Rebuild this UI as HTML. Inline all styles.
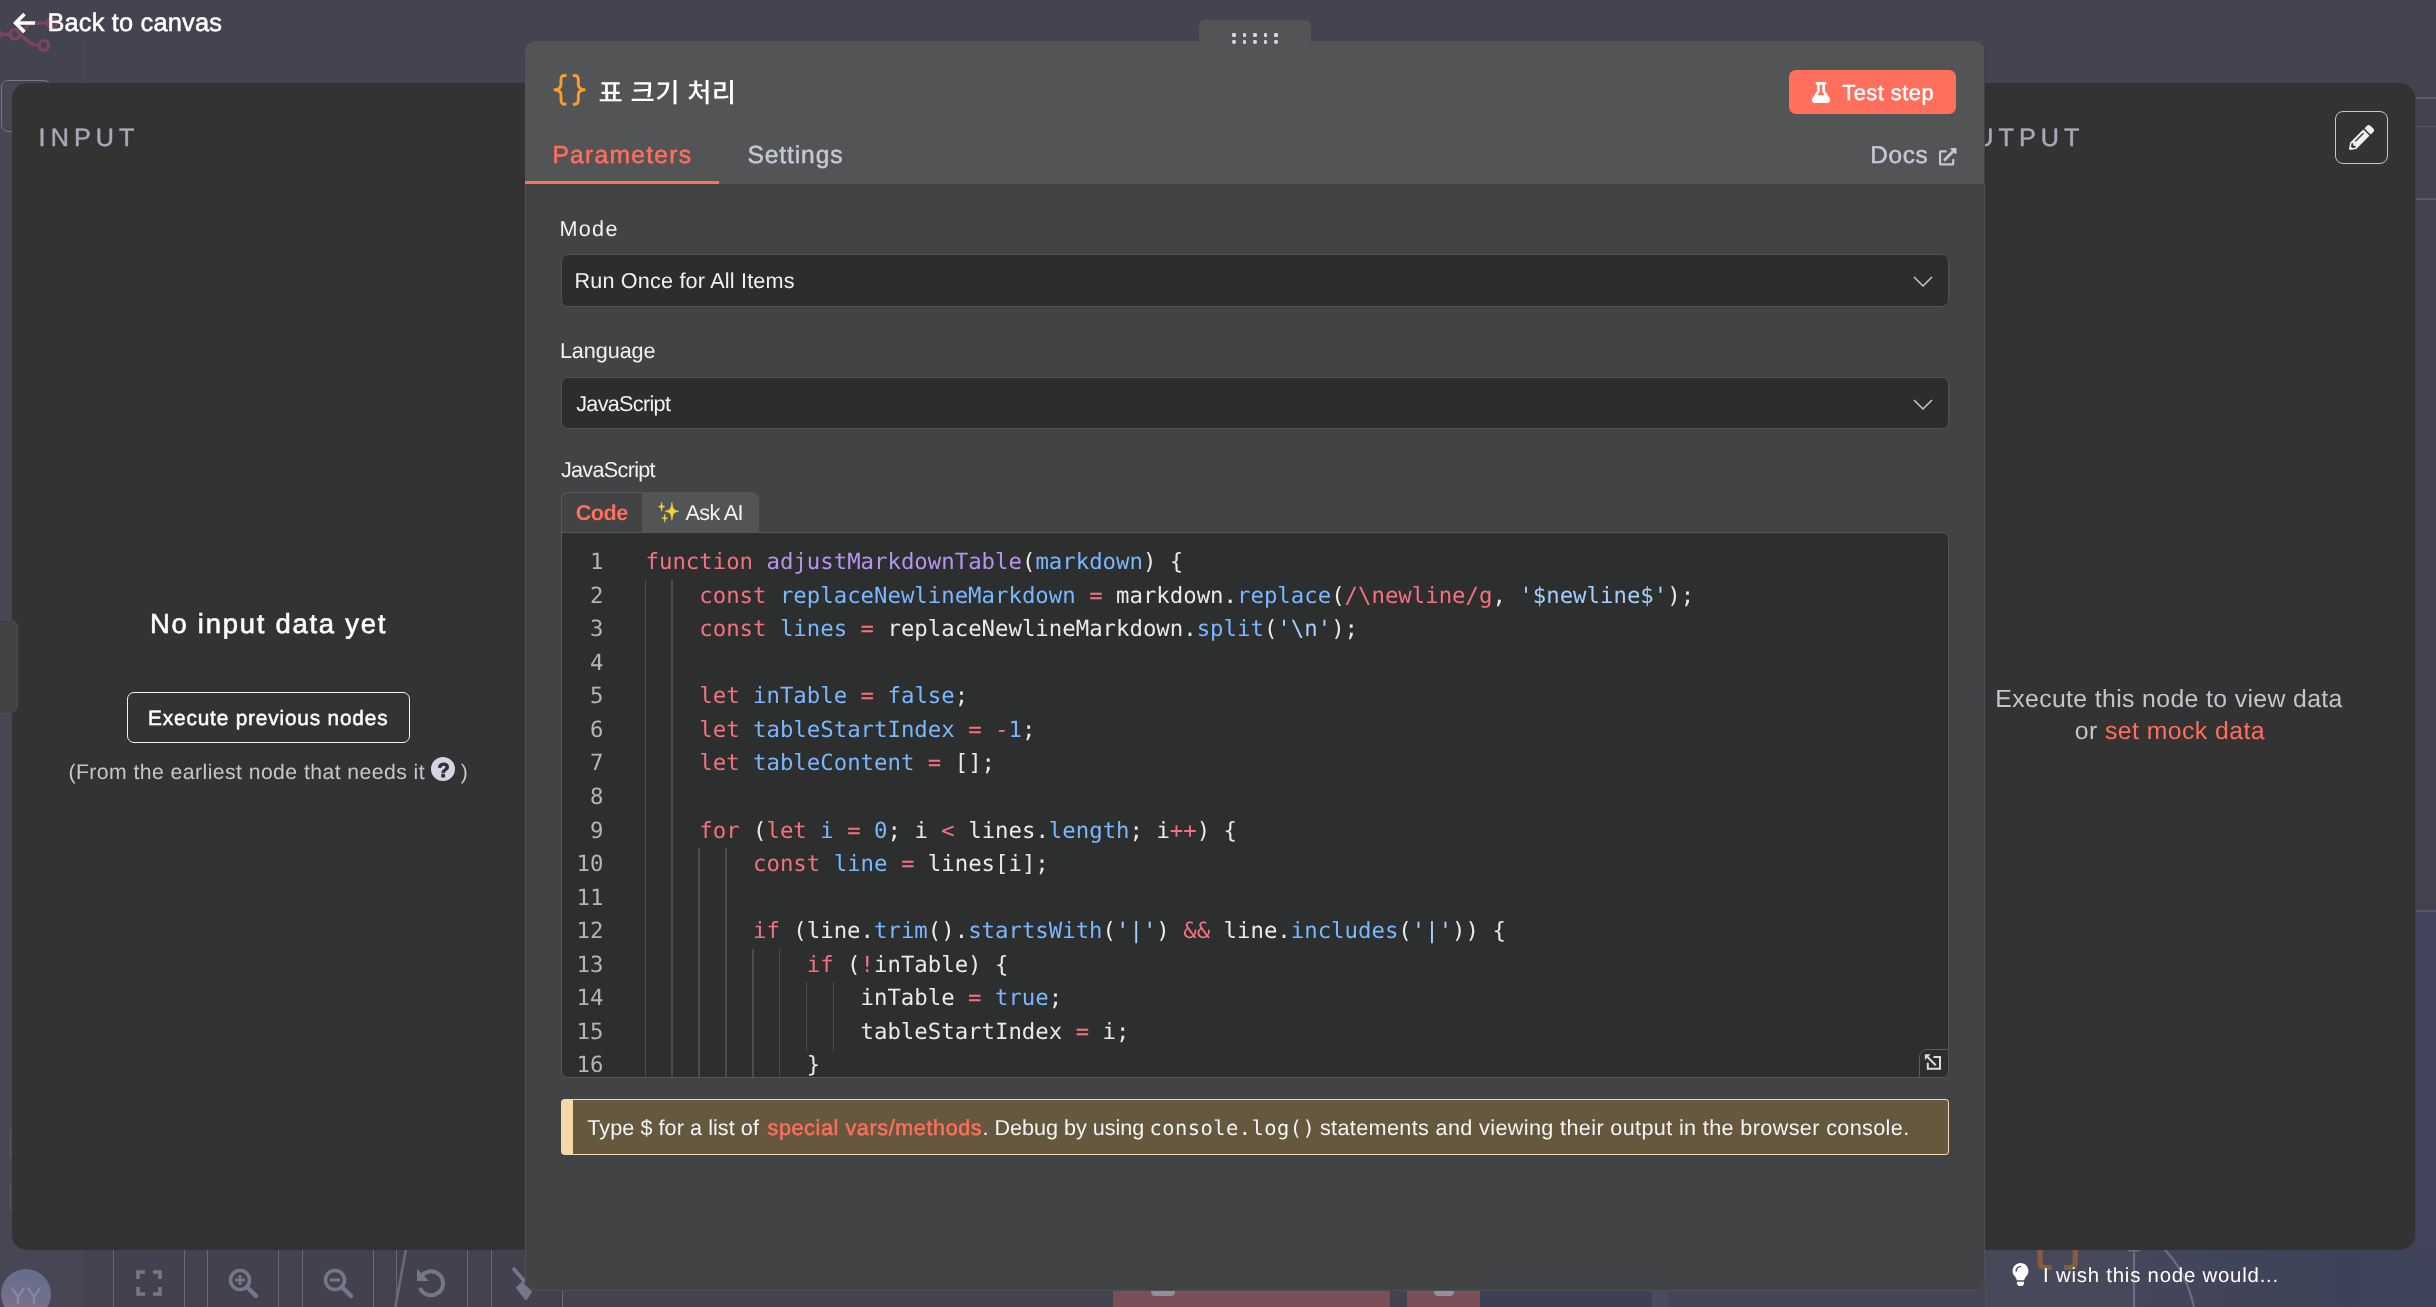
<!DOCTYPE html>
<html lang="en"><head><meta charset="utf-8"><title>n8n - Code node</title>
<style>
html,body{margin:0;padding:0;background:#444450;}
body{width:2436px;height:1307px;position:relative;overflow:hidden;text-rendering:geometricPrecision;font-family:"Liberation Sans","Noto Sans CJK KR",sans-serif;}
body div, body svg, body i{position:absolute;box-sizing:border-box;}
.t{white-space:nowrap;line-height:1;}
.t span{position:static;}
#ed .ln{left:0;width:41.5px;text-align:right;color:#b4b4b6;font:22.33px/33.5px "DejaVu Sans Mono","Liberation Mono",monospace;height:33.5px;}
#ed .cl{white-space:pre;color:#e9e9ea;font:22.33px/33.5px "DejaVu Sans Mono","Liberation Mono",monospace;height:33.5px;}
#ed b{font-weight:400;}
.k,.o{color:#f4727f;}
.f{color:#b794f0;}
.v{color:#79b8ff;}
.s{color:#a5cfff;}
.g{display:block;width:1.5px;height:34.6px;background:#4b4c4c;}
</style></head>
<body>
<div id="w" style="left:0;top:0;width:2436px;height:1307px;will-change:transform;">
<!-- canvas behind overlay -->
<div style="left:84px;top:84px;width:2352px;height:1223px;background:#42434f;"></div>
<div style="left:0px;top:84px;width:84px;height:1223px;background:#464654;"></div>
<div style="left:83px;top:40px;width:1px;height:43px;background:#4c4c5a;"></div>
<svg style="left:0;top:0" width="70" height="60" viewBox="0 0 70 60"><g fill="none" stroke="#7a4561" stroke-width="3.3"><path d="M-2 34.3H9.500"/><circle cx="-4" cy="34.3" r="4.600"/><circle cx="14.700" cy="34.300" r="4.700"/><path d="M19.300 33.200C26 33 25 23 32 23H47"/><circle cx="52" cy="23" r="4.700"/><path d="M19.300 35.500C27 36 27 45.500 39 45.500"/><circle cx="43.900" cy="45.500" r="4.800"/></g></svg>
<div style="left:1px;top:80px;width:50px;height:52px;border:1px solid #777887;border-radius:7px;"></div>
<div style="left:10px;top:1127px;width:30px;height:32px;border:1px solid #5a5b6a;border-radius:6px;"></div>
<div style="left:10px;top:1180px;width:30px;height:34px;border:1px solid #5a5b6a;border-radius:6px;"></div>
<div style="left:112.7px;top:1246px;width:72px;height:70px;background:#41424e;border:1px solid #676879;border-radius:4px;"></div>
<div style="left:206.9px;top:1246px;width:72px;height:70px;background:#41424e;border:1px solid #676879;border-radius:4px;"></div>
<div style="left:301.8px;top:1246px;width:72px;height:70px;background:#41424e;border:1px solid #676879;border-radius:4px;"></div>
<div style="left:395.7px;top:1246px;width:72px;height:70px;background:#41424e;border:1px solid #676879;border-radius:4px;"></div>
<div style="left:490.9px;top:1246px;width:72px;height:70px;background:#41424e;border:1px solid #676879;border-radius:4px;"></div>
<svg style="left:136px;top:1270px" width="26" height="26" viewBox="0 0 26 26"><g fill="none" stroke="#76768a" stroke-width="3.6"><path d="M2 9V2h7M17 2h7v7M24 17v7h-7M9 24H2v-7"/></g></svg>
<svg style="left:228px;top:1268px" width="32" height="32" viewBox="0 0 32 32"><g fill="none" stroke="#76768a" stroke-width="3.6"><circle cx="12" cy="12" r="9.5"/><path d="M19 19l9 9" stroke-linecap="round" stroke-width="4.5"/><path d="M7 12h10M12 7v10" stroke-width="3"/></g></svg>
<svg style="left:323px;top:1268px" width="32" height="32" viewBox="0 0 32 32"><g fill="none" stroke="#76768a" stroke-width="3.6"><circle cx="12" cy="12" r="9.5"/><path d="M19 19l9 9" stroke-linecap="round" stroke-width="4.5"/><path d="M7 12h10" stroke-width="3"/></g></svg>
<svg style="left:416px;top:1266px" width="32" height="34" viewBox="0 0 32 34"><g fill="none" stroke="#76768a" stroke-width="4"><path d="M4.5 11.5A12 12 0 1 1 4 22"/></g><path d="M1 3v12h12z" fill="#76768a"/></svg>
<svg style="left:392px;top:1249px" width="16" height="60" viewBox="0 0 16 60"><path d="M14 0L3 60" stroke="#6a6a7a" stroke-width="2.5" fill="none"/></svg>
<svg style="left:510px;top:1266px" width="30" height="34" viewBox="0 0 30 34"><path d="M3 2l12 14M12 18l8 8-4 6-8-10z" stroke="#76768a" stroke-width="3.5" fill="#76768a"/></svg>
<div style="left:1px;top:1269px;width:50px;height:50px;border-radius:50%;background:linear-gradient(190deg,#666d8d 15%,#746f8b 60%,#93717d 100%);"></div>
<div class="t" style="left:10.0px;top:1285px;font-size:24px;color:#8a8a9f;">YY</div>
<div style="left:1113px;top:1291px;width:276.5px;height:16px;background:#7a4f57;"></div>
<div style="left:1407px;top:1291px;width:73px;height:16px;background:#7a4f57;"></div>
<div style="left:1480px;top:1291px;width:172px;height:16px;background:#3d4054;"></div>
<div style="left:1652px;top:1291px;width:16px;height:16px;background:#494b5f;"></div>
<div style="left:1668px;top:1291px;width:317px;height:16px;background:#444658;"></div>
<div style="left:1151px;top:1291px;width:24px;height:5px;background:#8f8f9e;border-radius:0 0 4px 4px;"></div>
<div style="left:1434px;top:1291px;width:20px;height:5px;background:#8f8f9e;border-radius:0 0 4px 4px;"></div>
<div style="left:2416px;top:97px;width:20px;height:1.5px;background:#5a5a6c;"></div>
<div style="left:2416px;top:125.5px;width:20px;height:1.5px;background:#5a5a6c;"></div>
<div style="left:2416px;top:198px;width:20px;height:1.5px;background:#5a5a6c;"></div>
<div style="left:2416px;top:911px;width:20px;height:396px;background:#41445a;"></div>
<div style="left:2416px;top:910px;width:20px;height:1.5px;background:#55586c;"></div>
<div style="left:1985px;top:1250px;width:149px;height:57px;background:#47485a;"></div>
<div style="left:2134px;top:1250px;width:302px;height:57px;background:linear-gradient(90deg,#44475b,#3d4258 70%,#3f4359);"></div>
<svg style="left:2030px;top:1249px" width="220" height="58" viewBox="0 0 220 58"><g fill="none" stroke="#6a6c81" stroke-width="2.200"><path d="M104 0V58M98 1.500H110"/><path d="M134 0C152 18 160 40 164 58"/></g><path d="M10 0v13q0 5.500 5.500 5.500h6M45.300 0v13q0 5.500-5.500 5.500h-6" stroke="#875c3d" stroke-width="5.200" fill="none"/></svg>
<svg style="left:13px;top:12px" width="24" height="22" viewBox="0 0 24 22"><path d="M11.5 2L2.5 11l9 9M3 11h19" fill="none" stroke="#fff" stroke-width="3.6" stroke-linecap="butt" stroke-linejoin="miter"/></svg>
<div class="t" style="left:47.4px;top:11px;font-size:25.4px;color:#fff;letter-spacing:0.177px;-webkit-text-stroke:0.5px #fff;">Back to canvas</div>
<div style="left:12px;top:83px;width:560px;height:1167px;background:#333333;border-radius:15px 0 0 15px;"></div>
<div class="t" style="left:38.6px;top:126px;font-size:25.2px;color:#a8a9b7;letter-spacing:5.075px;-webkit-text-stroke:0.45px #a8a9b7;">INPUT</div>
<div class="t" style="left:149.9px;top:610px;font-size:27.4px;color:#fff;letter-spacing:1.769px;-webkit-text-stroke:0.6px #fff;">No input data yet</div>
<div style="left:127px;top:692px;width:283px;height:50.5px;border:1.8px solid #f2f2f2;border-radius:7px;"></div>
<div class="t" style="left:148.1px;top:709px;font-size:20.8px;color:#fff;letter-spacing:0.833px;-webkit-text-stroke:0.5px #fff;">Execute previous nodes</div>
<div class="t" style="left:68.5px;top:762px;font-size:21.2px;color:#c6c6cc;letter-spacing:0.436px;">(From the earliest node that needs it</div>
<svg style="left:431px;top:757px" width="24" height="24" viewBox="0 0 24 24"><circle cx="12" cy="12" r="12" fill="#d4d5e3"/></svg>
<div class="t" style="left:437.6px;top:761px;font-size:20px;color:#2f3036;font-weight:700;-webkit-text-stroke:0.9px #2f3036;">?</div>
<div class="t" style="left:460.7px;top:762px;font-size:21.2px;color:#c6c6cc;">)</div>
<div style="left:-10px;top:619px;width:28px;height:95px;background:#424345;border:1px solid #4c4d50;border-radius:9px;"></div>
<div style="left:1900px;top:83px;width:515px;height:1167px;background:#333333;border-radius:0 15px 15px 0;"></div>
<div class="t" style="left:1950.6px;top:126px;font-size:25.2px;color:#a8a9b7;letter-spacing:5.075px;-webkit-text-stroke:0.45px #a8a9b7;">OUTPUT</div>
<div style="left:2335px;top:111px;width:53px;height:53px;border:1.8px solid #c6c6ca;border-radius:8px;"></div>
<svg style="left:2349px;top:125px" width="25" height="25" viewBox="0 0 512 512"><path fill="#f0f0f4" d="M497.9 142.1l-46.1 46.1c-4.7 4.7-12.3 4.7-17 0l-111-111c-4.7-4.7-4.7-12.3 0-17l46.1-46.1c18.7-18.7 49.1-18.7 67.900 0l60.100 60.100c18.800 18.700 18.800 49.100 0 67.900zM284.200 99.800L21.600 362.400.4 483.900c-2.900 16.400 11.400 30.600 27.800 27.800l121.500-21.300 262.600-262.600c4.700-4.700 4.700-12.300 0-17l-111-111c-4.800-4.700-12.400-4.700-17.100 0zM124.100 339.900c-5.500-5.500-5.500-14.300 0-19.800l154-154c5.500-5.500 14.300-5.500 19.800 0s5.500 14.300 0 19.800l-154 154c-5.500 5.500-14.300 5.500-19.800 0zM88 424h48v36.300l-64.500 11.300-31.100-31.100L51.700 376H88v48z"/></svg>
<div class="t" style="left:1995.3px;top:688px;font-size:24.8px;color:#c3c4cc;letter-spacing:0.369px;">Execute this node to view data</div>
<div class="t" style="left:2074.7px;top:720px;font-size:24.8px;color:#c3c4cc;letter-spacing:0.44px;">or <span style="color:#ff6f5c">set mock data</span></div>
<svg style="left:2012px;top:1263px" width="17" height="23" viewBox="0 0 352 512"><path fill="#fff" d="M96.060 454.350c.010 6.290 1.870 12.450 5.360 17.690l17.090 25.690a31.990 31.990 0 0 0 26.640 14.280h61.710a31.990 31.990 0 0 0 26.640-14.280l17.090-25.690a31.989 31.989 0 0 0 5.360-17.690l.04-38.350H96.010l.05 38.350zM0 176c0 44.370 16.450 84.850 43.560 115.780 16.520 18.850 42.360 58.230 52.210 91.450.04.260.07.520.11.780h160.240c.04-.26.070-.51.110-.78 9.850-33.220 35.690-72.600 52.210-91.450C335.550 260.850 352 220.370 352 176 352 78.610 272.910-.3 175.450 0 73.440.31 0 82.970 0 176zm176-80c-44.110 0-80 35.890-80 80 0 8.840-7.160 16-16 16s-16-7.160-16-16c0-61.760 50.240-112 112-112 8.840 0 16 7.160 16 16s-7.160 16-16 16z"/></svg>
<div class="t" style="left:2043.1px;top:1266px;font-size:20.4px;color:#fff;letter-spacing:0.775px;">I wish this node would...</div>
<div style="left:1199px;top:20px;width:112px;height:30px;background:#535456;border-radius:6px 6px 0 0;"></div>
<div style="left:1232.1px;top:33.0px;width:3.8px;height:3.8px;background:#d6d6e6;border-radius:50%;"></div>
<div style="left:1232.1px;top:40.1px;width:3.8px;height:3.8px;background:#d6d6e6;border-radius:50%;"></div>
<div style="left:1242.6px;top:33.0px;width:3.8px;height:3.8px;background:#d6d6e6;border-radius:50%;"></div>
<div style="left:1242.6px;top:40.1px;width:3.8px;height:3.8px;background:#d6d6e6;border-radius:50%;"></div>
<div style="left:1253.1px;top:33.0px;width:3.8px;height:3.8px;background:#d6d6e6;border-radius:50%;"></div>
<div style="left:1253.1px;top:40.1px;width:3.8px;height:3.8px;background:#d6d6e6;border-radius:50%;"></div>
<div style="left:1263.6px;top:33.0px;width:3.8px;height:3.8px;background:#d6d6e6;border-radius:50%;"></div>
<div style="left:1263.6px;top:40.1px;width:3.8px;height:3.8px;background:#d6d6e6;border-radius:50%;"></div>
<div style="left:1274.1px;top:33.0px;width:3.8px;height:3.8px;background:#d6d6e6;border-radius:50%;"></div>
<div style="left:1274.1px;top:40.1px;width:3.8px;height:3.8px;background:#d6d6e6;border-radius:50%;"></div>
<div style="left:525.4px;top:41px;width:1459.2px;height:1250px;border-radius:11px;overflow:hidden;background:#424345;">
<div style="left:0;top:0;width:1459px;height:143px;background:#535456;"></div>
<div style="left:0;top:143px;width:1459.2px;height:1107px;border:1px solid #4f5053;border-top:none;border-radius:0 0 11px 11px;"></div>
<div style="left:0;top:139.5px;width:194px;height:3.6px;background:#ff6f5c;"></div>
</div>
<div style="left:1232.1px;top:33.0px;width:3.8px;height:3.8px;background:#d6d6e6;border-radius:50%;"></div>
<div style="left:1232.1px;top:40.1px;width:3.8px;height:3.8px;background:#d6d6e6;border-radius:50%;"></div>
<div style="left:1242.6px;top:33.0px;width:3.8px;height:3.8px;background:#d6d6e6;border-radius:50%;"></div>
<div style="left:1242.6px;top:40.1px;width:3.8px;height:3.8px;background:#d6d6e6;border-radius:50%;"></div>
<div style="left:1253.1px;top:33.0px;width:3.8px;height:3.8px;background:#d6d6e6;border-radius:50%;"></div>
<div style="left:1253.1px;top:40.1px;width:3.8px;height:3.8px;background:#d6d6e6;border-radius:50%;"></div>
<div style="left:1263.6px;top:33.0px;width:3.8px;height:3.8px;background:#d6d6e6;border-radius:50%;"></div>
<div style="left:1263.6px;top:40.1px;width:3.8px;height:3.8px;background:#d6d6e6;border-radius:50%;"></div>
<div style="left:1274.1px;top:33.0px;width:3.8px;height:3.8px;background:#d6d6e6;border-radius:50%;"></div>
<div style="left:1274.1px;top:40.1px;width:3.8px;height:3.8px;background:#d6d6e6;border-radius:50%;"></div>
<svg style="left:550px;top:70px" width="40" height="40" viewBox="0 0 40 40"><g fill="none" stroke="#fb9d2e" stroke-width="2.900" stroke-linejoin="round"><path d="M16.400 5.500H14.500C11.500 5.500 11 7.200 11 9.700V14.500C11 17.500 9 19.300 5 19.800 9 20.300 11 22 11 25V30C11 32.500 11.500 34.200 14.500 34.200H16.400"/><path d="M22.800 5.500H24.700C27.700 5.500 28.300 7.200 28.300 9.700V14.500C28.300 17.500 30.300 19.300 34.300 19.800 30.300 20.300 28.300 22 28.300 25V30C28.300 32.500 27.700 34.200 24.700 34.200H22.800"/></g></svg>
<div class="t" style="left:598.5px;top:80px;font-size:26.4px;color:#fff;font-weight:500;letter-spacing:0.25px;font-family:"Liberation Sans","Noto Sans CJK KR",sans-serif;">표 크기 처리</div>
<div style="left:1789px;top:70px;width:167px;height:44px;background:#ff6f5c;border-radius:7px;"></div>
<svg style="left:1811px;top:82px" width="20" height="21" viewBox="0 0 448 512"><path fill="#fff" d="M437.2 403.500L320 215V64h8c13.300 0 24-10.700 24-24V24c0-13.300-10.700-24-24-24H120c-13.300 0-24 10.700-24 24v16c0 13.300 10.700 24 24 24h8v151L10.800 403.500C-18.500 450.600 15.300 512 70.900 512h306.200c55.700 0 89.400-61.500 60.100-108.500zM137.900 320l48.200-77.600c3.700-5.200 5.800-11.600 5.800-18.400V64h64v160c0 6.900 2.200 13.200 5.800 18.400l48.200 77.600h-172z"/></svg>
<div class="t" style="left:1842.3px;top:82px;font-size:21.8px;color:#fff;letter-spacing:0.5px;-webkit-text-stroke:0.45px #fff;">Test step</div>
<div class="t" style="left:552.4px;top:144px;font-size:24.6px;color:#ff6f5c;letter-spacing:1.278px;-webkit-text-stroke:0.5px #ff6f5c;">Parameters</div>
<div class="t" style="left:747.4px;top:144px;font-size:24.6px;color:#c5c7d4;letter-spacing:0.9px;-webkit-text-stroke:0.5px #c5c7d4;">Settings</div>
<div class="t" style="left:1870.3px;top:144px;font-size:24.3px;color:#c5c7d4;letter-spacing:0.667px;-webkit-text-stroke:0.5px #c5c7d4;">Docs</div>
<svg style="left:1939.3px;top:148.2px" width="17.5" height="17.5" viewBox="0 0 512 512"><path fill="#c5c7d4" d="M432 320H400a16 16 0 0 0-16 16V448H64V128H208a16 16 0 0 0 16-16V80a16 16 0 0 0-16-16H48A48 48 0 0 0 0 112V464a48 48 0 0 0 48 48H400a48 48 0 0 0 48-48V336A16 16 0 0 0 432 320ZM488 0h-128c-21.370 0-32.050 25.910-17 41l35.730 35.730L135 320.370a24 24 0 0 0 0 34L157.670 377a24 24 0 0 0 34 0L435.280 133.320 471 169c15 15 41 4.500 41-17V24A24 24 0 0 0 488 0Z"/></svg>
<div class="t" style="left:559.5px;top:218px;font-size:21.6px;color:#f1f1f1;letter-spacing:1.3px;">Mode</div>
<div style="left:561px;top:254px;width:1388px;height:52.5px;background:#2d2d2d;border:1px solid #505154;border-radius:7px;"></div>
<div class="t" style="left:574.5px;top:270px;font-size:21.6px;color:#f1f1f1;letter-spacing:0.19px;">Run Once for All Items</div>
<svg style="left:1912.300px;top:273.600px" width="22" height="15" viewBox="0 0 22 15"><path d="M2 3l9 9 9-9" fill="none" stroke="#c6c6c9" stroke-width="1.550"/></svg>
<div class="t" style="left:559.9px;top:340px;font-size:21.6px;color:#f1f1f1;letter-spacing:-0.057px;">Language</div>
<div style="left:561px;top:377px;width:1388px;height:52px;background:#2d2d2d;border:1px solid #505154;border-radius:7px;"></div>
<div class="t" style="left:576.2px;top:393px;font-size:21.6px;color:#f1f1f1;letter-spacing:-0.678px;">JavaScript</div>
<svg style="left:1912.300px;top:396.600px" width="22" height="15" viewBox="0 0 22 15"><path d="M2 3l9 9 9-9" fill="none" stroke="#c6c6c9" stroke-width="1.550"/></svg>
<div class="t" style="left:560.9px;top:459px;font-size:21.6px;color:#f1f1f1;letter-spacing:-0.678px;">JavaScript</div>
<div style="left:561px;top:492px;width:82px;height:42px;background:#424345;border:1px solid #58595c;border-bottom:none;border-radius:7px 0 0 0;"></div>
<div style="left:642px;top:492px;width:117px;height:40px;background:#535456;border-radius:0 7px 0 0;"></div>
<div class="t" style="left:575.7px;top:502px;font-size:21.6px;color:#ff6f5c;font-weight:700;letter-spacing:-0.433px;">Code</div>
<svg style="left:655px;top:498px" width="28" height="28" viewBox="0 0 28 28"><path fill="#f7d23c" stroke="#f7d23c" stroke-width="0.6" stroke-linejoin="round" d="M16.899999999999977 4.300000000000011C18.12 11.68 18.12 11.68 23.699999999999978 13.300000000000011C18.12 14.92 18.12 14.92 16.899999999999977 22.30000000000001C15.68 14.92 15.68 14.92 10.099999999999977 13.300000000000011C15.68 11.68 15.68 11.68 16.899999999999977 4.300000000000011zM6.600000000000023 4.099999999999989C7.14 7.87 7.14 7.87 9.600000000000023 8.699999999999989C7.14 9.53 7.14 9.53 6.600000000000023 13.299999999999988C6.06 9.53 6.06 9.53 3.6000000000000227 8.699999999999989C6.06 7.87 6.06 7.87 6.600000000000023 4.099999999999989zM9.799999999999955 15.900000000000023C10.34 19.34 10.34 19.34 12.799999999999955 20.100000000000023C10.34 20.86 10.34 20.86 9.799999999999955 24.300000000000022C9.26 20.86 9.26 20.86 6.7999999999999545 20.100000000000023C9.26 19.34 9.26 19.34 9.799999999999955 15.900000000000023z"/></svg>
<div class="t" style="left:685.5px;top:502px;font-size:21.6px;color:#f1f1f1;letter-spacing:-0.62px;">Ask AI</div>
<div id="ed" style="left:561px;top:532px;width:1388px;height:545.5px;background:#2d2e2e;border:1px solid #55565a;border-radius:0 7px 7px 7px;overflow:hidden;">
<div class="ln" style="top:13.00px">1</div>
<div class="cl" style="left:83.50px;top:13.00px"><b class="k">function</b> <b class="f">adjustMarkdownTable</b>(<b class="v">markdown</b>) {</div>
<i class="g" style="left:82.50px;top:47.00px"></i>
<i class="g" style="left:109.38px;top:47.00px"></i>
<div class="ln" style="top:47.00px">2</div>
<div class="cl" style="left:137.26px;top:47.00px"><b class="k">const</b> <b class="v">replaceNewlineMarkdown</b> <b class="o">=</b> markdown.<b class="v">replace</b>(<b class="o">/\newline/g</b>, <b class="s">&#x27;$newline$&#x27;</b>);</div>
<i class="g" style="left:82.50px;top:80.00px"></i>
<i class="g" style="left:109.38px;top:80.00px"></i>
<div class="ln" style="top:80.00px">3</div>
<div class="cl" style="left:137.26px;top:80.00px"><b class="k">const</b> <b class="v">lines</b> <b class="o">=</b> replaceNewlineMarkdown.<b class="v">split</b>(<b class="s">&#x27;\n&#x27;</b>);</div>
<i class="g" style="left:82.50px;top:114.00px"></i>
<i class="g" style="left:109.38px;top:114.00px"></i>
<div class="ln" style="top:114.00px">4</div>
<i class="g" style="left:82.50px;top:147.00px"></i>
<i class="g" style="left:109.38px;top:147.00px"></i>
<div class="ln" style="top:147.00px">5</div>
<div class="cl" style="left:137.26px;top:147.00px"><b class="k">let</b> <b class="v">inTable</b> <b class="o">=</b> <b class="v">false</b>;</div>
<i class="g" style="left:82.50px;top:181.00px"></i>
<i class="g" style="left:109.38px;top:181.00px"></i>
<div class="ln" style="top:181.00px">6</div>
<div class="cl" style="left:137.26px;top:181.00px"><b class="k">let</b> <b class="v">tableStartIndex</b> <b class="o">=</b> <b class="o">-</b><b class="v">1</b>;</div>
<i class="g" style="left:82.50px;top:214.00px"></i>
<i class="g" style="left:109.38px;top:214.00px"></i>
<div class="ln" style="top:214.00px">7</div>
<div class="cl" style="left:137.26px;top:214.00px"><b class="k">let</b> <b class="v">tableContent</b> <b class="o">=</b> [];</div>
<i class="g" style="left:82.50px;top:248.00px"></i>
<i class="g" style="left:109.38px;top:248.00px"></i>
<div class="ln" style="top:248.00px">8</div>
<i class="g" style="left:82.50px;top:282.00px"></i>
<i class="g" style="left:109.38px;top:282.00px"></i>
<div class="ln" style="top:282.00px">9</div>
<div class="cl" style="left:137.26px;top:282.00px"><b class="k">for</b> (<b class="k">let</b> <b class="v">i</b> <b class="o">=</b> <b class="v">0</b>; i <b class="o">&lt;</b> lines.<b class="v">length</b>; i<b class="o">++</b>) {</div>
<i class="g" style="left:82.50px;top:315.00px"></i>
<i class="g" style="left:109.38px;top:315.00px"></i>
<i class="g" style="left:136.26px;top:315.00px"></i>
<i class="g" style="left:163.14px;top:315.00px"></i>
<div class="ln" style="top:315.00px">10</div>
<div class="cl" style="left:191.02px;top:315.00px"><b class="k">const</b> <b class="v">line</b> <b class="o">=</b> lines[i];</div>
<i class="g" style="left:82.50px;top:349.00px"></i>
<i class="g" style="left:109.38px;top:349.00px"></i>
<i class="g" style="left:136.26px;top:349.00px"></i>
<i class="g" style="left:163.14px;top:349.00px"></i>
<div class="ln" style="top:349.00px">11</div>
<i class="g" style="left:82.50px;top:382.00px"></i>
<i class="g" style="left:109.38px;top:382.00px"></i>
<i class="g" style="left:136.26px;top:382.00px"></i>
<i class="g" style="left:163.14px;top:382.00px"></i>
<div class="ln" style="top:382.00px">12</div>
<div class="cl" style="left:191.02px;top:382.00px"><b class="k">if</b> (line.<b class="v">trim</b>().<b class="v">startsWith</b>(<b class="s">&#x27;|&#x27;</b>) <b class="o">&amp;&amp;</b> line.<b class="v">includes</b>(<b class="s">&#x27;|&#x27;</b>)) {</div>
<i class="g" style="left:82.50px;top:416.00px"></i>
<i class="g" style="left:109.38px;top:416.00px"></i>
<i class="g" style="left:136.26px;top:416.00px"></i>
<i class="g" style="left:163.14px;top:416.00px"></i>
<i class="g" style="left:190.02px;top:416.00px"></i>
<i class="g" style="left:216.90px;top:416.00px"></i>
<div class="ln" style="top:416.00px">13</div>
<div class="cl" style="left:244.78px;top:416.00px"><b class="k">if</b> (<b class="o">!</b>inTable) {</div>
<i class="g" style="left:82.50px;top:449.00px"></i>
<i class="g" style="left:109.38px;top:449.00px"></i>
<i class="g" style="left:136.26px;top:449.00px"></i>
<i class="g" style="left:163.14px;top:449.00px"></i>
<i class="g" style="left:190.02px;top:449.00px"></i>
<i class="g" style="left:216.90px;top:449.00px"></i>
<i class="g" style="left:243.78px;top:449.00px"></i>
<i class="g" style="left:270.66px;top:449.00px"></i>
<div class="ln" style="top:449.00px">14</div>
<div class="cl" style="left:298.54px;top:449.00px">inTable <b class="o">=</b> <b class="v">true</b>;</div>
<i class="g" style="left:82.50px;top:483.00px"></i>
<i class="g" style="left:109.38px;top:483.00px"></i>
<i class="g" style="left:136.26px;top:483.00px"></i>
<i class="g" style="left:163.14px;top:483.00px"></i>
<i class="g" style="left:190.02px;top:483.00px"></i>
<i class="g" style="left:216.90px;top:483.00px"></i>
<i class="g" style="left:243.78px;top:483.00px"></i>
<i class="g" style="left:270.66px;top:483.00px"></i>
<div class="ln" style="top:483.00px">15</div>
<div class="cl" style="left:298.54px;top:483.00px">tableStartIndex <b class="o">=</b> i;</div>
<i class="g" style="left:82.50px;top:516.00px"></i>
<i class="g" style="left:109.38px;top:516.00px"></i>
<i class="g" style="left:136.26px;top:516.00px"></i>
<i class="g" style="left:163.14px;top:516.00px"></i>
<i class="g" style="left:190.02px;top:516.00px"></i>
<i class="g" style="left:216.90px;top:516.00px"></i>
<div class="ln" style="top:516.00px">16</div>
<div class="cl" style="left:244.78px;top:516.00px">}</div>
<div style="left:1357px;top:515.500px;width:40px;height:40px;background:#2d2e2e;border:1px solid #5a5b5e;border-radius:8px 0 0 0;"></div>
<svg style="left:1362px;top:520px" width="20" height="20" viewBox="0 0 20 20"><path d="M3.800 9.800V15.800H16V4H9.500M3.500 4L11.800 12.200" fill="none" stroke="#dcdce2" stroke-width="2"/><path d="M0.900 1.300H6.600L0.900 7z" fill="#dcdce2"/></svg>
</div>
<div style="left:561px;top:1099px;width:1388px;height:56px;background:#66573f;border:1.5px solid #f6d9a9;border-left:12.5px solid #f6d9a9;border-radius:4px;"></div>
<div class="t" style="left:587.3px;top:1117px;font-size:21.6px;color:#f4f4f4;letter-spacing:0.063px;">Type $ for a list of</div>
<div class="t" style="left:767.5px;top:1117px;font-size:21.6px;color:#ff6f5c;letter-spacing:0.595px;-webkit-text-stroke:0.5px #ff6f5c;">special vars/methods</div>
<div class="t" style="left:982.5px;top:1117px;font-size:21.6px;color:#f4f4f4;letter-spacing:-0.013px;">. Debug by using</div>
<div class="t" style="left:1149.4px;top:1118px;font-size:20.4px;color:#f4f4f4;letter-spacing:0.475px;font-family:'DejaVu Sans Mono','Liberation Mono',monospace;">console.log()</div>
<div class="t" style="left:1319.9px;top:1117px;font-size:21.6px;color:#f4f4f4;letter-spacing:0.371px;">statements and viewing their output in the browser console.</div>
</div>
</body></html>
